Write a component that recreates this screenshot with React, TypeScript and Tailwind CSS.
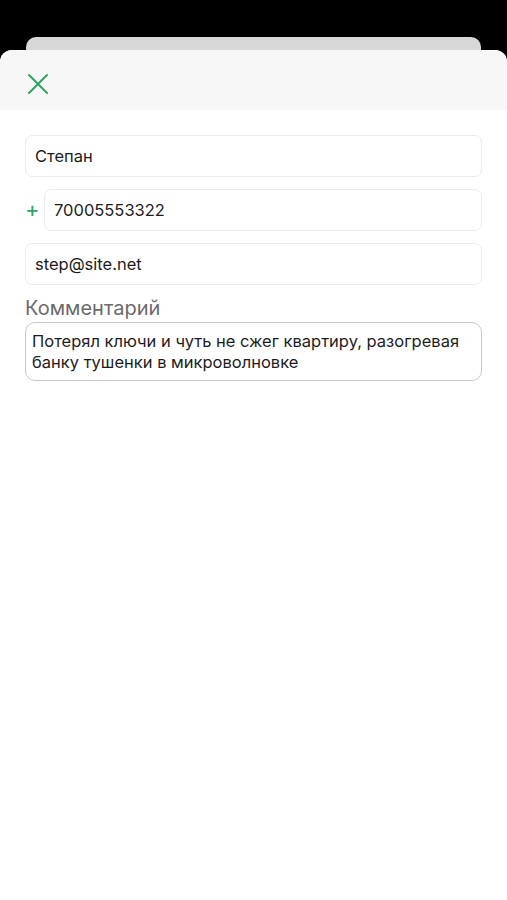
import { useState } from 'react'

function CloseIcon() {
  return (
    <svg width="22" height="22" viewBox="0 0 22 22" fill="none">
      <path d="M2 2 L20 20 M20 2 L2 20" stroke="#2ea462" strokeWidth="2" strokeLinecap="round" />
    </svg>
  )
}

function Field({ value }: { value: string }) {
  return (
    <div className="h-[42px] min-w-0 flex-1 rounded-[7px] border border-[#ebebeb] bg-white px-[9px] flex items-center text-[16.5px] text-[#1c1c1c]">
      {value}
    </div>
  )
}

export default function App() {
  const [comment] = useState(
    'Потерял ключи и чуть не сжег квартиру, разогревая банку тушенки в микроволновке',
  )

  return (
    <div
      className="w-[507px] h-[900px] bg-black pt-[37px] flex flex-col overflow-hidden"
      style={{ fontFamily: 'Inter, "Noto Sans", sans-serif' }}
    >
      <div className="mx-[26px] h-[13px] shrink-0 rounded-t-[10px] bg-[#d8d8d8]" />
      <div className="flex-1 rounded-t-[12px] bg-white flex flex-col overflow-hidden">
        <header className="h-[60px] shrink-0 bg-[#f7f7f7] pl-[27px] pt-[23px]">
          <CloseIcon />
        </header>
        <main className="px-[25px] pt-[25px] flex flex-col">
          <div className="flex">
            <Field value="Степан" />
          </div>
          <div className="mt-[12px] flex items-center gap-[7px]">
            <span className="w-[12px] text-[22px] leading-none text-[#2ea462] -mt-[2px]">+</span>
            <Field value="70005553322" />
          </div>
          <div className="mt-[12px] flex">
            <Field value="step@site.net" />
          </div>
          <label className="mt-[11px] text-[20px] leading-[24px] text-[#6b6b6b]">Комментарий</label>
          <div className="mt-[2px] h-[59px] rounded-[10px] border border-[#c8c8c8] px-[6px] pt-[8px] text-[16.5px] leading-[21px] text-[#1c1c1c]">
            {comment}
          </div>
        </main>
      </div>
    </div>
  )
}
